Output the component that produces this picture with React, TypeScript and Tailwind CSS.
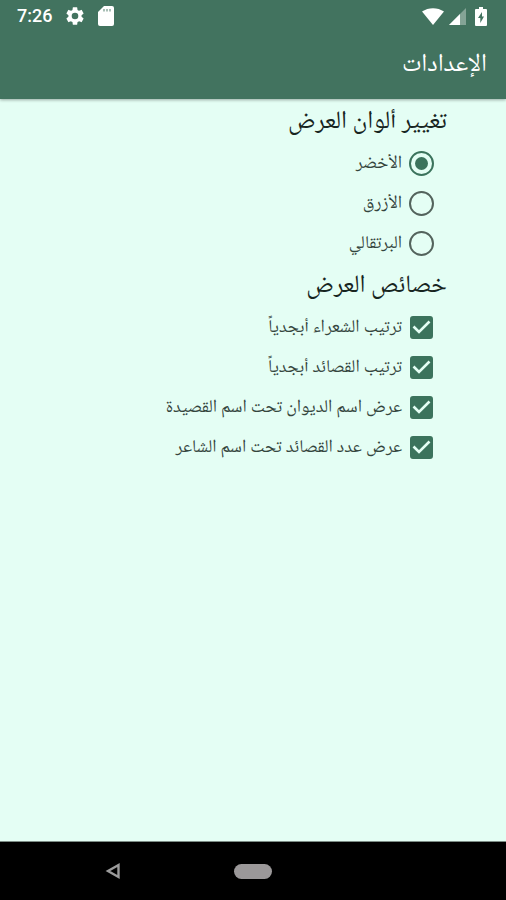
import { useState } from "react";

const colors = ["الأخضر", "الأزرق", "البرتقالي"];
const options = [
  "ترتيب الشعراء أبجدياً",
  "ترتيب القصائد أبجدياً",
  "عرض اسم الديوان تحت اسم القصيدة",
  "عرض عدد القصائد تحت اسم الشاعر",
];

function StatusBar() {
  return (
    <div dir="ltr" className="flex h-8 items-center justify-between pr-4 pl-[17px] text-white">
      <div className="flex items-center gap-3">
        <span className="font-[Roboto,sans-serif] text-lg leading-5 font-medium">7:26</span>
        <svg viewBox="0 0 24 24" className="size-[22px]" fill="currentColor" aria-hidden="true">
          <path d="M19.14 12.94c.04-.3.06-.61.06-.94s-.02-.64-.07-.94l2.03-1.58a.5.5 0 0 0 .12-.61l-1.92-3.32a.49.49 0 0 0-.59-.22l-2.39.96a7 7 0 0 0-1.62-.94l-.36-2.54a.48.48 0 0 0-.48-.41h-3.84a.47.47 0 0 0-.47.41l-.36 2.54c-.59.24-1.13.57-1.62.94l-2.39-.96a.48.48 0 0 0-.59.22L2.74 8.87a.47.47 0 0 0 .12.61l2.03 1.58c-.05.3-.09.63-.09.94s.02.64.07.94l-2.03 1.58a.5.5 0 0 0-.12.61l1.92 3.32c.12.22.37.29.59.22l2.39-.96c.5.38 1.03.7 1.62.94l.36 2.54c.05.24.24.41.48.41h3.84c.24 0 .44-.17.47-.41l.36-2.54c.59-.24 1.13-.56 1.62-.94l2.39.96c.22.08.47 0 .59-.22l1.92-3.32a.47.47 0 0 0-.12-.61zM12 15.6a3.6 3.6 0 1 1 0-7.2 3.6 3.6 0 0 1 0 7.2" />
        </svg>
        <svg viewBox="0 0 16 20" className="h-5 w-4" fill="currentColor" aria-hidden="true">
          <path d="M6 0h8a2 2 0 0 1 2 2v16a2 2 0 0 1-2 2H2a2 2 0 0 1-2-2V6z" />
          <path stroke="#42735f" strokeWidth="1.500" opacity=".6" d="M6 3v2.500M9 3v2.500M12 3v2.500" />
        </svg>
      </div>
      <div className="flex items-center">
        <svg viewBox="0 0 22 17" className="h-[17px] w-[22px]" fill="currentColor" aria-hidden="true">
          <path d="M0 3.6C6.500-.9 15.500-.9 22 3.600L11 17z" />
        </svg>
        <svg viewBox="0 0 17 17" className="ml-[5px] h-[17px] w-[17px]" fill="currentColor" aria-hidden="true">
          <path opacity=".35" d="M17 0v17H0z" />
          <path d="M11 6v11H0z" />
        </svg>
        <svg viewBox="0 0 12 19" className="mr-[3px] ml-[9px] h-[19px] w-3" fill="currentColor" aria-hidden="true">
          <path fillRule="evenodd" d="M4 0h4v2h3a1 1 0 0 1 1 1v15a1 1 0 0 1-1 1H1a1 1 0 0 1-1-1V3a1 1 0 0 1 1-1h3zM7 5l-4 6h2.300v5L9 9.500H7z" />
        </svg>
      </div>
    </div>
  );
}

export default function App() {
  const [color, setColor] = useState(0);
  const [checked, setChecked] = useState([true, true, true, true]);

  return (
    <div
      dir="rtl"
      lang="ar"
      className="flex min-h-screen flex-col bg-[#e4fef4] font-['Noto_Naskh_Arabic_UI','Noto_Naskh_Arabic','DejaVu_Sans',sans-serif] text-[#17251f]"
    >
      <header className="h-[99px] bg-[#42735f] shadow-[0_1px_3px_#0005]">
        <StatusBar />
        <h1 className="flex h-16 items-center px-[19px] text-[25px] leading-8 text-white">الإعدادات</h1>
      </header>

      <main className="grow px-[59px]">
        <fieldset>
          <legend className="flex h-11 items-center text-[25px] leading-8">تغيير ألوان العرض</legend>
          {colors.map((name, i) => (
            <label key={name} className="flex h-10 items-center gap-[7px] pr-[13px] text-lg text-[#34453d]">
              <input
                type="radio"
                name="color"
                checked={color === i}
                onChange={() => setColor(i)}
                className="size-[25px] shrink-0 appearance-none rounded-full border-2 border-[#53635c] bg-clip-content p-1 checked:border-[#3b735c] checked:bg-[#3b735c]"
              />
              {name}
            </label>
          ))}
        </fieldset>

        <fieldset>
          <legend className="flex h-11 items-center text-[25px] leading-8">خصائص العرض</legend>
          {options.map((name, i) => (
            <label key={name} className="flex h-10 items-center gap-[7px] pr-[13px] text-lg whitespace-nowrap text-[#34453d]">
              <span className="grid size-[25px] shrink-0 place-items-center">
                <input
                  type="checkbox"
                  checked={checked[i]}
                  onChange={() => setChecked(checked.map((value, n) => (n === i ? !value : value)))}
                  className="col-start-1 row-start-1 size-[23px] appearance-none rounded-[3px] border-2 border-[#53635c] checked:border-[#3b735c] checked:bg-[#3b735c]"
                />
                <svg
                  viewBox="0 0 23 23"
                  className="pointer-events-none col-start-1 row-start-1 size-[23px]"
                  fill="none"
                  stroke="#e4fef4"
                  strokeWidth="2.600"
                  aria-hidden="true"
                >
                  <path d="M3.500 10.500 9 16 19.500 5.500" />
                </svg>
              </span>
              {name}
            </label>
          ))}
        </fieldset>
      </main>

      <nav dir="ltr" className="grid h-[59px] grid-cols-[1fr_auto_1fr] items-center border-t border-[#7d8d86] bg-black">
        <button type="button" aria-label="رجوع" className="mr-[113px] justify-self-end">
          <svg viewBox="0 0 16 18" className="h-[18px] w-4" fill="none" stroke="#9b9b9b" strokeWidth="2.400" aria-hidden="true">
            <path d="M13.500 3v12L3 9z" />
          </svg>
        </button>
        <button type="button" aria-label="الشاشة الرئيسية" className="h-[15px] w-[38px] rounded-full bg-[#9b9899]" />
      </nav>
    </div>
  );
}
